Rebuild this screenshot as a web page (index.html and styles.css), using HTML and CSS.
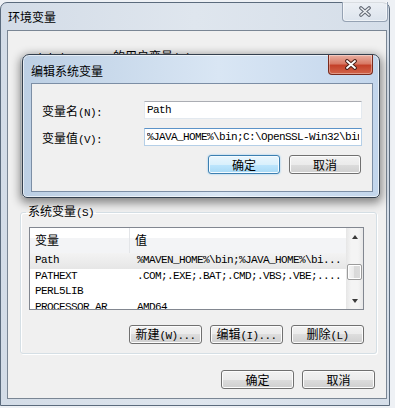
FILE: index.html
```html
<!DOCTYPE html>
<html lang="zh-CN">
<head>
  <meta charset="UTF-8">
  <title>环境变量</title>
  <link rel="stylesheet" href="styles.css">
</head>
<body>
  <div class="win">
    <div class="win-title">环境变量</div>
    <button class="win-close">
      <svg width="14" height="11" viewBox="0 0 14 11">
        <path d="M3 2 L11 9 M11 2 L3 9" stroke="#5f6671" stroke-width="3.6" stroke-linecap="round"/>
        <path d="M3 2 L11 9 M11 2 L3 9" stroke="#eef1f4" stroke-width="1.6" stroke-linecap="round"/>
      </svg>
    </button>
    <div class="client">
      <fieldset class="group user-group">
        <legend><span class="m">Administrator </span>的用户变量<span class="m">(U)</span></legend>
      </fieldset>

      <fieldset class="group sys-group">
        <legend>系统变量<span class="m">(S)</span></legend>
        <div class="list">
          <div class="list-body">
            <div class="list-head">
              <div class="c1">变量</div>
              <div class="c2">值</div>
            </div>
            <div class="row sel"><div class="c1 m">Path</div><div class="c2 m">%MAVEN_HOME%\bin;%JAVA_HOME%\bi...</div></div>
            <div class="row"><div class="c1 m">PATHEXT</div><div class="c2 m">.COM;.EXE;.BAT;.CMD;.VBS;.VBE;....</div></div>
            <div class="row"><div class="c1 m">PERL5LIB</div><div class="c2 m"></div></div>
            <div class="row"><div class="c1 m">PROCESSOR_AR</div><div class="c2 m">AMD64</div></div>
          </div>
          <div class="vscroll">
            <div class="arrow"><span class="tri up"></span></div>
            <div class="track"><div class="thumb"></div></div>
            <div class="arrow"><span class="tri down"></span></div>
          </div>
        </div>
        <div class="btn-row">
          <button class="btn">新建<span class="m">(W)...</span></button>
          <button class="btn">编辑<span class="m">(I)...</span></button>
          <button class="btn">删除<span class="m">(L)</span></button>
        </div>
      </fieldset>

      <div class="btn-row bottom-row">
        <button class="btn">确定</button>
        <button class="btn">取消</button>
      </div>
    </div>
  </div>

  <div class="dlg">
    <div class="dlg-title">编辑系统变量</div>
    <button class="dlg-close">
      <svg width="14" height="11" viewBox="0 0 14 11">
        <path d="M3 2 L11 9 M11 2 L3 9" stroke="#4a2018" stroke-width="3.8" stroke-linecap="round"/>
        <path d="M3 2 L11 9 M11 2 L3 9" stroke="#ffffff" stroke-width="1.8" stroke-linecap="round"/>
      </svg>
    </button>
    <div class="dlg-client">
      <div class="field-row">
        <label class="field-label">变量名<span class="m">(N):</span></label>
        <input class="field m" value="Path">
      </div>
      <div class="field-row">
        <label class="field-label">变量值<span class="m">(V):</span></label>
        <input class="field focus m" value="%JAVA_HOME%\bin;C:\OpenSSL-Win32\bin;%MAVEN_HOME%\bin">
      </div>
      <div class="btn-row dlg-btns">
        <button class="btn default">确定</button>
        <button class="btn">取消</button>
      </div>
    </div>
  </div>
</body>
</html>
```

FILE: styles.css
```css
* { box-sizing: border-box; }
body {
  margin: 0;
  width: 395px;
  height: 408px;
  overflow: hidden;
  position: relative;
  background: #eef1f5;
  font-family: "Noto Sans CJK SC", sans-serif;
  font-size: 12px;
  color: #000;
}
.m {
  font-family: "Liberation Mono", "Noto Sans CJK SC", monospace;
  font-size: 11px;
  letter-spacing: -0.6px;
}

/* main window */
.win {
  margin-top: 2px;
  width: 390px;
  height: 404px;
  border: 1px solid #5b6b7d;
  border-radius: 7px 7px 0 0;
  background: linear-gradient(to right, #d3dce7, #dfe6ee 50%, #d5dee9);
  padding: 0 2px 6px 6px;
  display: flex;
  flex-direction: column;
  position: relative;
}
.win-title {
  height: 27px;
  line-height: 27px;
  padding-left: 1px;
}
.win-close {
  position: absolute;
  top: -1px;
  right: 1px;
  width: 46px;
  height: 20px;
  border: 1px solid #95a2b3;
  border-top: none;
  border-radius: 0 0 4px 4px;
  background: linear-gradient(rgba(255,255,255,.55), rgba(255,255,255,.15));
  box-shadow: inset 0 0 0 1px rgba(255,255,255,.5);
  padding: 0;
  display: flex;
  align-items: center;
  justify-content: center;
}
.client {
  flex: 1;
  border: 1px solid #7a8694;
  background: #f0f0f0;
  padding: 0 9px 0 12px;
  display: flex;
  flex-direction: column;
}

.group {
  margin: 0;
  min-width: 0;
  border: 1px solid #d5dfe5;
  border-radius: 3px;
  box-shadow: inset 1px 1px 0 #fff, 1px 1px 0 #fff;
  padding: 0 12px 9px 8px;
}
.group legend {
  padding: 0 2px;
  margin-left: -2px;
  line-height: 14px;
}
.user-group {
  margin-top: 18px;
  height: 147px;
}
.sys-group {
  margin-top: 8px;
}
.sys-group legend { margin-left: -3px; }

/* list view */
.list {
  margin-top: 7px;
  height: 83px;
  border: 1px solid #828790;
  background: #fff;
  display: flex;
}
.list-body {
  flex: 1;
  overflow: hidden;
}
.list-head {
  height: 25px;
  display: flex;
  background: linear-gradient(#ffffff 0, #ffffff 40%, #f3f4f6 40%, #f3f4f6 100%);
  line-height: 24px;
}
.list-head .c1 {
  border-right: 1px solid #e3e5e8;
}
.list-head .c2 { padding-left: 5px; }
.c1 {
  width: 100px;
  padding-left: 5px;
  white-space: nowrap;
  overflow: hidden;
}
.c2 {
  flex: 1;
  padding-left: 7px;
  white-space: nowrap;
  overflow: hidden;
}
.row {
  height: 15.5px;
  line-height: 15.5px;
  display: flex;
}
.row.sel {
  background: linear-gradient(#f3f3f3, #e6e6e6);
}
.vscroll {
  width: 17px;
  display: flex;
  flex-direction: column;
  background: linear-gradient(to right, #e6e6e6, #f4f4f4 30%, #f4f4f4 70%, #e8e8e8);
}
.arrow {
  height: 17px;
  display: flex;
  align-items: center;
  justify-content: center;
}
.tri {
  width: 0;
  height: 0;
  border-left: 3.5px solid transparent;
  border-right: 3.5px solid transparent;
}
.tri.up { border-bottom: 4px solid #3a3a3a; }
.tri.down { border-top: 4px solid #3a3a3a; }
.track { flex: 1; }
.thumb {
  margin: 19px 1px 0;
  height: 16px;
  border: 1px solid #9b9b9b;
  border-radius: 2px;
  background: linear-gradient(to right, #f5f5f5, #e8e8e8 50%, #d9d9d9 50%, #dcdcdc);
  box-shadow: inset 0 0 0 1px #fff;
}

/* buttons */
.btn-row {
  display: flex;
  justify-content: flex-end;
  gap: 8px;
  margin-top: 15px;
}
.bottom-row {
  margin-top: 16px;
  padding-right: 2px;
}
.btn {
  width: 73px;
  height: 19px;
  padding: 0;
  border: 1px solid #707070;
  border-radius: 3px;
  background: linear-gradient(#f2f2f2 0, #ebebeb 50%, #dddddd 50%, #cfcfcf 100%);
  box-shadow: inset 0 0 0 1px #fcfcfc;
  font-family: "Noto Sans CJK SC", sans-serif;
  font-size: 12px;
  line-height: 16px;
  color: #000;
}
.btn.default {
  border-color: #3c7fb1;
  background: linear-gradient(#eaf6fd 0, #d9f0fc 50%, #bee6fd 50%, #a7d9f5 100%);
  box-shadow: inset 0 0 0 1px #f4fbff, 0 0 2px #7fc0ee;
}

/* edit dialog */
.dlg {
  position: absolute;
  left: 22px;
  top: 54px;
  width: 358px;
  height: 144px;
  border: 1px solid #34404e;
  border-radius: 7px 7px 5px 5px;
  background: linear-gradient(to right, #bccfe4, #d9e6f4 55%, #c3d6ec);
  box-shadow: 0 3px 10px 2px rgba(0,0,0,.45), inset 0 0 0 1px rgba(255,255,255,.6);
  padding: 0 6px 5px 8px;
  display: flex;
  flex-direction: column;
}
.dlg-title {
  height: 28px;
  line-height: 31px;
}
.dlg-close {
  position: absolute;
  top: 0;
  right: 6px;
  width: 45px;
  height: 20px;
  border: 1px solid #7a2a1c;
  border-top: none;
  border-radius: 0 0 4px 4px;
  background: linear-gradient(#eab0a2 0, #d87a66 45%, #c4412a 55%, #d2654a 100%);
  box-shadow: inset 0 0 0 1px rgba(255,255,255,.35);
  padding: 0;
  display: flex;
  align-items: center;
  justify-content: center;
}
.dlg-client {
  flex: 1;
  border: 1px solid #7c8ea5;
  background: #f0f0f0;
  padding: 17px 10px 0 10px;
}
.field-row {
  height: 18px;
  margin-bottom: 9px;
  display: flex;
  align-items: center;
}
.field-label {
  width: 102px;
}
.field {
  width: 218px;
  height: 18px;
  margin: 0;
  padding: 0 2px;
  border: 1px solid #e3e9ef;
  border-top-color: #abadb3;
  background: #fff;
  color: #000;
  outline: none;
}
.field.focus {
  border-color: #b5cfe7;
  border-top-color: #5c93c8;
}
.dlg-btns {
  margin-top: 5px;
  padding-right: 1px;
  gap: 9px;
}
.dlg-btns .btn { width: 72px; }
```
